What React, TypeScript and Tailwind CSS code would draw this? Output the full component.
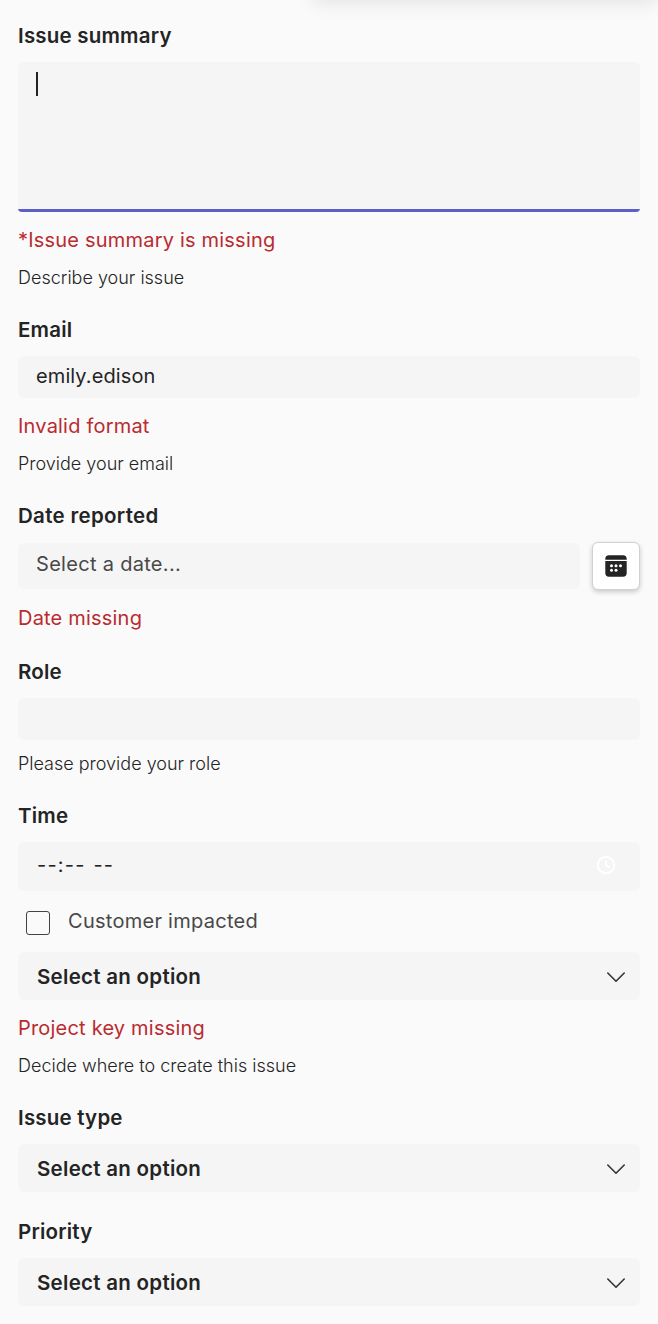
import React from 'react';

function Label({ top, track = 'tracking-[0.2px]', children }: { top: string; track?: string; children: React.ReactNode }) {
  return <div className={'h-7 text-[20.5px] leading-7 font-semibold text-[#242424] ' + top + ' ' + track}>{children}</div>;
}
function Err({ top, children }: { top: string; children: React.ReactNode }) {
  return <div className={'h-7 text-[20px] leading-7 tracking-[0.2px] text-[#b92b30] ' + top}>{children}</div>;
}
function Help({ top, children }: { top: string; children: React.ReactNode }) {
  return <div className={'h-6 text-[18px] leading-6 font-light text-[#242424] ' + top}>{children}</div>;
}
function Select({ top }: { top: string }) {
  return (
    <button className={'flex h-12 w-full items-center justify-between rounded-md bg-[#f5f5f5] pr-[14px] pl-[19px] text-[20.5px] font-semibold tracking-[0.28px] text-[#242424] ' + top}>
      <span className="pt-0.5">Select an option</span>
      <svg width="20" height="20" viewBox="0 0 20 20" fill="none" stroke="#333" strokeWidth="1.6" strokeLinecap="round" strokeLinejoin="round"><path d="M1.8 7l8.2 8.2 8.2-8.2" /></svg>
    </button>
  );
}

export default function App() {
  return (
    <main className="relative flex h-[1324px] w-[658px] flex-col overflow-hidden bg-[#fafafa] px-[18px] font-['Inter',sans-serif]">
      <div className="absolute -top-8 left-[312px] h-7 w-[346px] rounded-lg shadow-[0_6px_20px_rgba(0,0,0,0.1)]" />
      <Label top="mt-[22px]">Issue summary</Label>
      <div className="mt-3 flex h-[150px] shrink-0 flex-col justify-between overflow-hidden rounded-t-md rounded-b-[4px] bg-[#f5f5f5]">
        <div className="mt-[10px] ml-[18px] h-6 w-0.5 bg-[#242424]" />
        <div className="h-[3px] bg-[#5b5fc7]" />
      </div>
      <Err top="mt-[14px]">*Issue summary is missing</Err>
      <Help top="mt-[12px]">Describe your issue</Help>
      <Label top="mt-[26px]">Email</Label>
      <div className="mt-[12px] h-[42px] rounded-md bg-[#f5f5f5] pl-[18px] text-[20px] leading-[40px] tracking-[0.1px] text-[#242424]">emily.edison</div>
      <Err top="mt-[14px]">Invalid format</Err>
      <Help top="mt-[12px]">Provide your email</Help>
      <Label top="mt-[26px]" track="tracking-[0.32px]">Date reported</Label>
      <div className="mt-[12px] flex h-12 items-center justify-between">
        <div className="h-[46px] w-[562px] rounded-md bg-[#f5f5f5] pl-[18px] text-[20px] leading-[42px] tracking-[0.3px] text-[#484848]">Select a date...</div>
        <div className="flex size-12 items-center justify-center rounded-md border border-[#d1d1d1] bg-white shadow-[0_2px_5px_rgba(0,0,0,0.2)]">
          <svg width="22" height="22" viewBox="0 0 22 22" fill="#242424"><path d="M0.3 4.7V4A3.7 3.7 0 0 1 4 .3h14A3.7 3.7 0 0 1 21.7 4v.7zM0.3 6.1h21.4V18a3.7 3.7 0 0 1-3.7 3.7H4A3.7 3.7 0 0 1 .3 18z" /><g fill="#fff"><circle cx="6.5" cy="10.8" r="1.5" /><circle cx="11" cy="10.8" r="1.5" /><circle cx="15.5" cy="10.8" r="1.5" /><circle cx="6.5" cy="15.3" r="1.5" /><circle cx="11" cy="15.3" r="1.5" /></g></svg>
        </div>
      </div>
      <Err top="mt-[14px]">Date missing</Err>
      <Label top="mt-[26px]">Role</Label>
      <div className="mt-[12px] h-[42px] rounded-md bg-[#f5f5f5]" />
      <Help top="mt-[12px]">Please provide your role</Help>
      <Label top="mt-[26px]">Time</Label>
      <div className="mt-[12px] flex h-[49px] items-center justify-between rounded-md bg-[#f5f5f5] pr-6 pb-[3px] pl-[19px] text-[20px] tracking-[1.2px] [word-spacing:1px] text-[#242424]">
        <span>--:-- --</span>
        <svg width="20" height="20" viewBox="0 0 20 20" fill="none" stroke="#fff" strokeWidth="2"><circle cx="10" cy="10" r="8.2" /><path d="M10 5.2v5.2l4 2.2" /></svg>
      </div>
      <div className="mt-[16px] flex h-7 items-center pl-[8px] text-[20px] tracking-[0.27px] text-[#484848]">
        <span className="mt-[4px] mr-[18px] size-6 rounded-[3px] border border-[#424242]" />Customer impacted
      </div>
      <Select top="mt-[17px]" />
      <Err top="mt-[14px]">Project key missing</Err>
      <Help top="mt-[12px]">Decide where to create this issue</Help>
      <Label top="mt-[26px]">Issue type</Label>
      <Select top="mt-[12px]" />
      <Label top="mt-[26px]">Priority</Label>
      <Select top="mt-[12px]" />
    </main>
  );
}
